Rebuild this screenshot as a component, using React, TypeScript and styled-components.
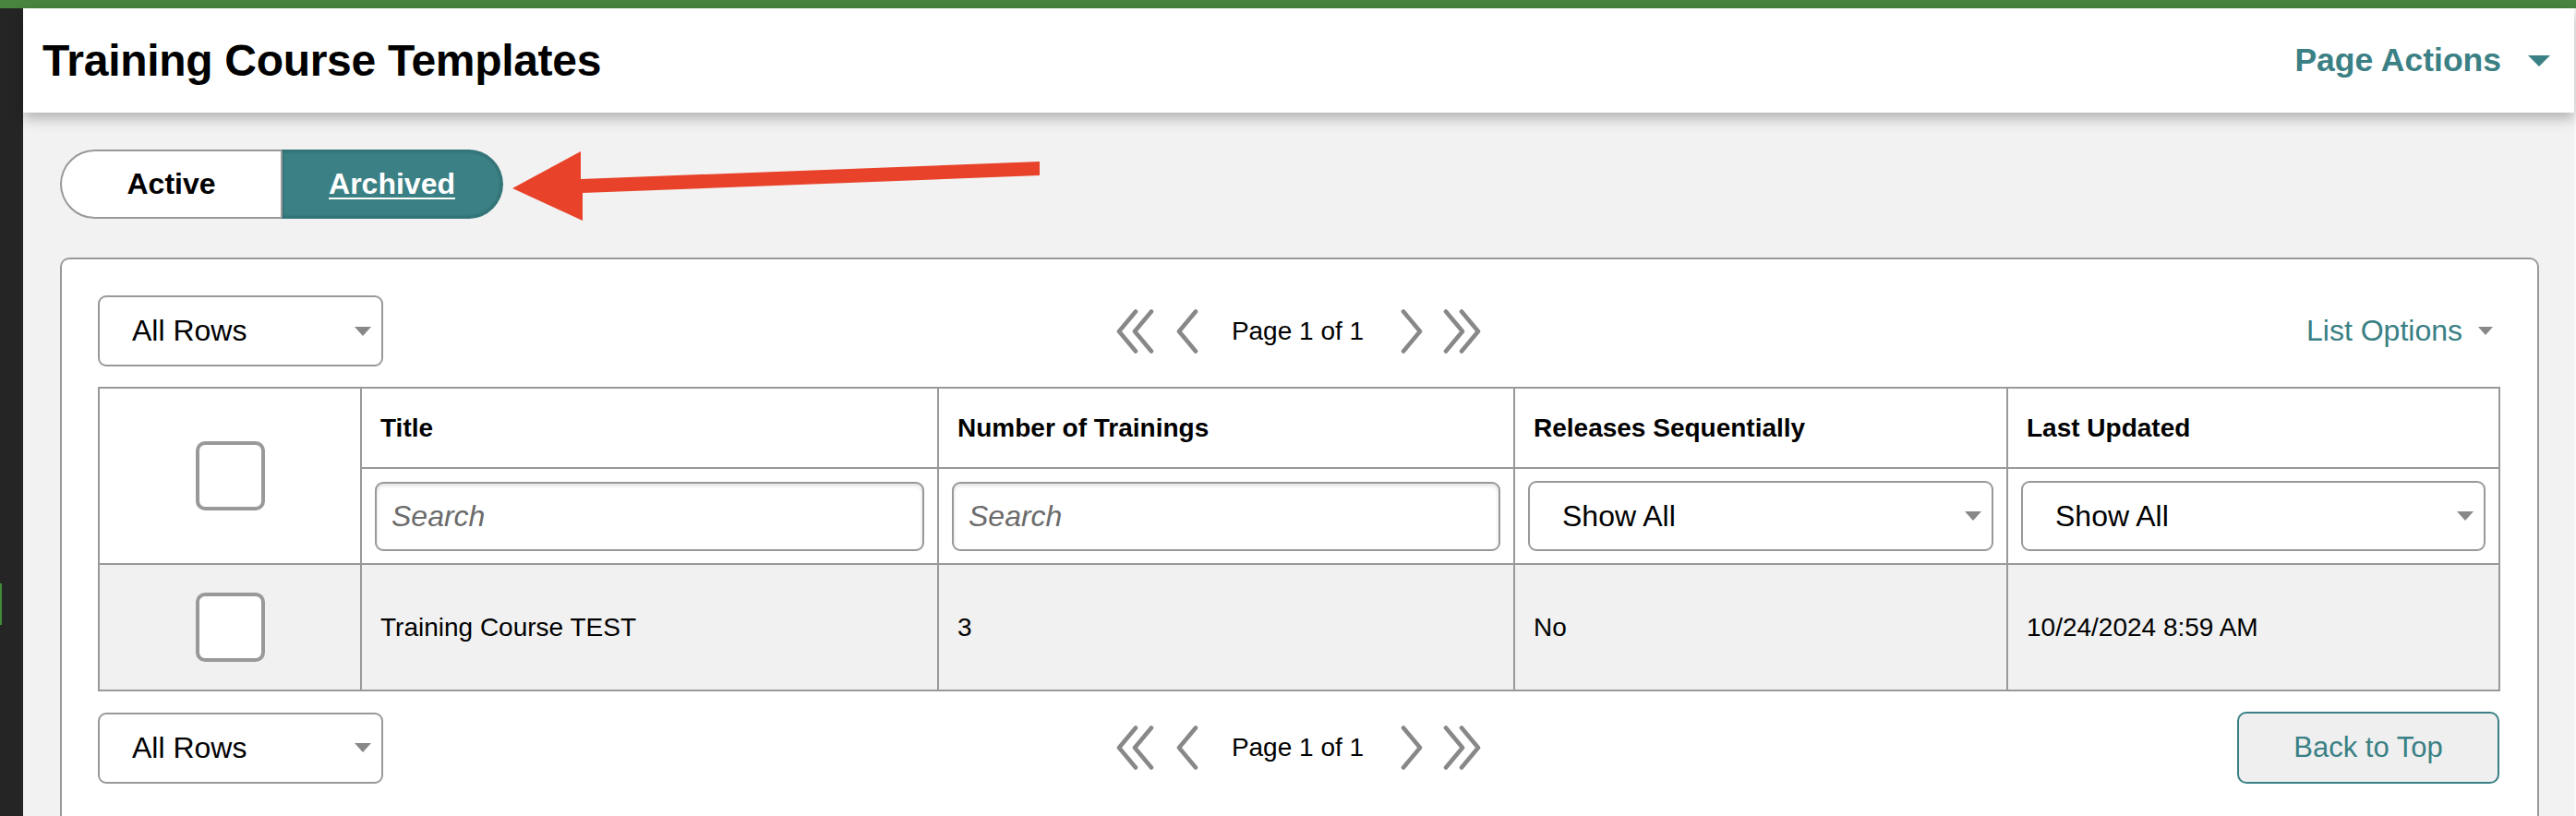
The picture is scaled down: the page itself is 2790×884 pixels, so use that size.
import React from "react";
import styled, { createGlobalStyle, css } from "styled-components";

const teal = "#3a8084";
const rule = "#999999";
const fontStack = `"Liberation Sans", Arial, Helvetica, sans-serif`;

const GlobalStyle = createGlobalStyle`
  * { box-sizing: border-box; }
  html, body { margin: 0; padding: 0; }
  body {
    background: #f2f2f2;
    font-family: ${fontStack};
    color: #000;
  }
`;

const Shell = styled.div`
  display: flex;
  flex-direction: column;
  min-height: 884px;
`;

const BrandBar = styled.div`
  height: 9px;
  flex-shrink: 0;
  background: #4a8540;
`;

const Body = styled.div`
  display: flex;
  flex: 1;
`;

const SideRail = styled.aside`
  width: 25px;
  flex-shrink: 0;
  background: #252526;
  padding-top: 623px;
`;

const RailMark = styled.span`
  display: block;
  width: 2px;
  height: 45px;
  background: #3f8a3a;
`;

const Main = styled.main`
  flex: 1;
  min-width: 0;
  display: flex;
  flex-direction: column;
  border-right: 2px solid #f9f9f9;
`;

const Header = styled.header`
  position: relative;
  z-index: 1;
  height: 113px;
  flex-shrink: 0;
  display: flex;
  align-items: center;
  justify-content: space-between;
  padding: 0 26px 0 21px;
  background: #fff;
  box-shadow: 0 6px 14px rgba(0, 0, 0, 0.28);
`;

const PageTitle = styled.h1`
  margin: 0;
  font-size: 48px;
  font-weight: 700;
  letter-spacing: -0.3px;
`;

const PageActions = styled.button`
  display: flex;
  align-items: center;
  gap: 29px;
  padding: 0;
  border: none;
  background: none;
  color: ${teal};
  font: 700 35.5px ${fontStack};
  cursor: pointer;
`;

const HeaderCaret = styled.span`
  width: 0;
  height: 0;
  border-left: 12px solid transparent;
  border-right: 12px solid transparent;
  border-top: 12px solid ${teal};
`;

const Content = styled.div`
  flex: 1;
  display: flex;
  flex-direction: column;
  padding: 40px 38px 0 40px;
`;

const ToggleRow = styled.div`
  position: relative;
  height: 75px;
`;

const ViewToggle = styled.div`
  display: flex;
  width: 480px;
  height: 75px;
`;

const ToggleOption = styled.button<{ $selected?: boolean }>`
  flex: 1;
  font: 700 32px ${fontStack};
  cursor: pointer;
  ${(p) =>
    p.$selected
      ? css`
          background: ${teal};
          color: #fff;
          text-decoration: underline;
          text-decoration-thickness: 2px;
          text-underline-offset: 4px;
          border: 2px solid #33767a;
          border-left-color: ${rule};
          border-radius: 0 38px 38px 0;
          box-shadow: inset 0 0 3px rgba(0, 0, 0, 0.3);
        `
      : css`
          background: #fff;
          color: #000;
          border: 2px solid ${rule};
          border-right: none;
          border-radius: 38px 0 0 38px;
        `}
`;

const Pointer = styled.svg`
  position: absolute;
  left: 480px;
  top: 0;
  width: 600px;
  height: 80px;
  pointer-events: none;
`;

const Card = styled.section`
  flex: 1;
  margin-top: 42px;
  padding: 39px 41px 39px 39px;
  background: #fff;
  border: 2px solid ${rule};
  border-bottom: none;
  border-radius: 10px 10px 0 0;
`;

const Toolbar = styled.div`
  display: grid;
  grid-template-columns: 1fr auto 1fr;
  align-items: center;
  height: 77px;
`;

const SelectBox = styled.div<{ $fill?: boolean }>`
  display: flex;
  align-items: center;
  justify-content: space-between;
  width: ${(p) => (p.$fill ? "100%" : "309px")};
  height: ${(p) => (p.$fill ? "76px" : "77px")};
  padding: 0 11px 0 35px;
  background: #fff;
  border: 2px solid ${rule};
  border-radius: 9px;
  font-size: 32px;
  color: #000;
`;

const SelectCaret = styled.span`
  width: 0;
  height: 0;
  border-left: 9.5px solid transparent;
  border-right: 9.5px solid transparent;
  border-top: 10px solid #888;
`;

const Pager = styled.nav`
  display: flex;
  align-items: center;
`;

const PagerIcon = styled.svg<{ $gap: number }>`
  display: block;
  height: 48px;
  margin-right: ${(p) => p.$gap}px;
`;

const PagerLabel = styled.span`
  font-size: 28px;
  margin-right: 39px;
`;

const ListOptions = styled.button`
  justify-self: end;
  display: flex;
  align-items: center;
  gap: 17px;
  margin-right: 7px;
  padding: 0;
  border: none;
  background: none;
  color: ${teal};
  font: 400 32px ${fontStack};
  cursor: pointer;
`;

const SmallCaret = styled.span`
  width: 0;
  height: 0;
  border-left: 8px solid transparent;
  border-right: 8px solid transparent;
  border-top: 9px solid #888;
`;

const Grid = styled.table`
  width: 100%;
  margin: 22px 0;
  border-collapse: collapse;
  table-layout: fixed;
  border: 2px solid ${rule};
`;

const HeadCell = styled.th`
  height: 87px;
  padding: 0 20px;
  border: 2px solid ${rule};
  text-align: left;
  vertical-align: middle;
  font-size: 28px;
  font-weight: 700;
`;

const FilterCell = styled.td`
  height: 103px;
  padding: 13px 14px;
  border: 2px solid ${rule};
  vertical-align: middle;
`;

const CheckCell = styled.td<{ $shaded?: boolean }>`
  padding: 0;
  border: 2px solid ${rule};
  text-align: center;
  vertical-align: middle;
  background: ${(p) => (p.$shaded ? "#f1f1f1" : "#fff")};
`;

const BodyCell = styled.td`
  height: 137px;
  padding: 0 20px;
  border: 2px solid ${rule};
  background: #f1f1f1;
  font-size: 28px;
  vertical-align: middle;
`;

const CheckBox = styled.span`
  display: inline-block;
  vertical-align: middle;
  width: 75px;
  height: 75px;
  background: #fff;
  border: 4px solid ${rule};
  border-radius: 10px;
`;

const SearchInput = styled.input`
  display: block;
  width: 100%;
  height: 75px;
  padding: 0 16px;
  border: 2px solid ${rule};
  border-radius: 9px;
  box-shadow: inset 0 2px 4px rgba(0, 0, 0, 0.13);
  font: italic 400 32px ${fontStack};
  color: #000;
  outline: none;
  &::placeholder {
    color: #6b6b6b;
  }
`;

const BackToTop = styled.button`
  justify-self: end;
  width: 284px;
  height: 78px;
  background: #efefef;
  border: 2.5px solid ${teal};
  border-radius: 10px;
  color: ${teal};
  font: 400 31px ${fontStack};
  cursor: pointer;
`;

type ChevronKind = "first" | "prev" | "next" | "last";

const Chevron = ({ kind, gap }: { kind: ChevronKind; gap: number }) => {
  const double = kind === "first" || kind === "last";
  const width = double ? 43 : 26;
  const left = kind === "first" || kind === "prev";
  const single = (dx: number) =>
    left
      ? `${22 + dx},2.5 ${4 + dx},24 ${22 + dx},45.5`
      : `${4 + dx},2.5 ${22 + dx},24 ${4 + dx},45.5`;
  return (
    <PagerIcon $gap={gap} width={width} viewBox={`0 0 ${width} 48`}>
      <g fill="none" stroke="#888" strokeWidth={4.6} strokeLinecap="round" strokeLinejoin="round">
        <polyline points={single(0)} />
        {double && <polyline points={single(17)} />}
      </g>
    </PagerIcon>
  );
};

const Pagination = () => (
  <Pager>
    <Chevron kind="first" gap={22} />
    <Chevron kind="prev" gap={35} />
    <PagerLabel>Page 1 of 1</PagerLabel>
    <Chevron kind="next" gap={20} />
    <Chevron kind="last" gap={0} />
  </Pager>
);

const Select = ({ label, fill }: { label: string; fill?: boolean }) => (
  <SelectBox $fill={fill}>
    <span>{label}</span>
    <SelectCaret />
  </SelectBox>
);

const columns = [284, 625, 624, 534, 533];

const rows = [
  {
    title: "Training Course TEST",
    trainings: "3",
    sequential: "No",
    updated: "10/24/2024 8:59 AM",
  },
];

export default function App() {
  return (
    <Shell>
      <GlobalStyle />
      <BrandBar />
      <Body>
        <SideRail>
          <RailMark />
        </SideRail>
        <Main>
          <Header>
            <PageTitle>Training Course Templates</PageTitle>
            <PageActions>
              Page Actions
              <HeaderCaret />
            </PageActions>
          </Header>
          <Content>
            <ToggleRow>
              <ViewToggle>
                <ToggleOption>Active</ToggleOption>
                <ToggleOption $selected>Archived</ToggleOption>
              </ViewToggle>
              <Pointer viewBox="0 0 600 80">
                <polygon
                  points="10,42 84,2 84,32 581,13 581,28 86,47 86,77"
                  fill="#e8432a"
                />
              </Pointer>
            </ToggleRow>
            <Card>
              <Toolbar>
                <Select label="All Rows" />
                <Pagination />
                <ListOptions>
                  List Options
                  <SmallCaret />
                </ListOptions>
              </Toolbar>
              <Grid>
                <colgroup>
                  {columns.map((w, i) => (
                    <col key={i} style={{ width: w }} />
                  ))}
                </colgroup>
                <thead>
                  <tr>
                    <CheckCell as="th" rowSpan={2}>
                      <CheckBox />
                    </CheckCell>
                    <HeadCell>Title</HeadCell>
                    <HeadCell>Number of Trainings</HeadCell>
                    <HeadCell>Releases Sequentially</HeadCell>
                    <HeadCell>Last Updated</HeadCell>
                  </tr>
                  <tr>
                    <FilterCell>
                      <SearchInput placeholder="Search" />
                    </FilterCell>
                    <FilterCell>
                      <SearchInput placeholder="Search" />
                    </FilterCell>
                    <FilterCell>
                      <Select label="Show All" fill />
                    </FilterCell>
                    <FilterCell>
                      <Select label="Show All" fill />
                    </FilterCell>
                  </tr>
                </thead>
                <tbody>
                  {rows.map((r) => (
                    <tr key={r.title}>
                      <CheckCell $shaded>
                        <CheckBox />
                      </CheckCell>
                      <BodyCell>{r.title}</BodyCell>
                      <BodyCell>{r.trainings}</BodyCell>
                      <BodyCell>{r.sequential}</BodyCell>
                      <BodyCell>{r.updated}</BodyCell>
                    </tr>
                  ))}
                </tbody>
              </Grid>
              <Toolbar>
                <Select label="All Rows" />
                <Pagination />
                <BackToTop>Back to Top</BackToTop>
              </Toolbar>
            </Card>
          </Content>
        </Main>
      </Body>
    </Shell>
  );
}
